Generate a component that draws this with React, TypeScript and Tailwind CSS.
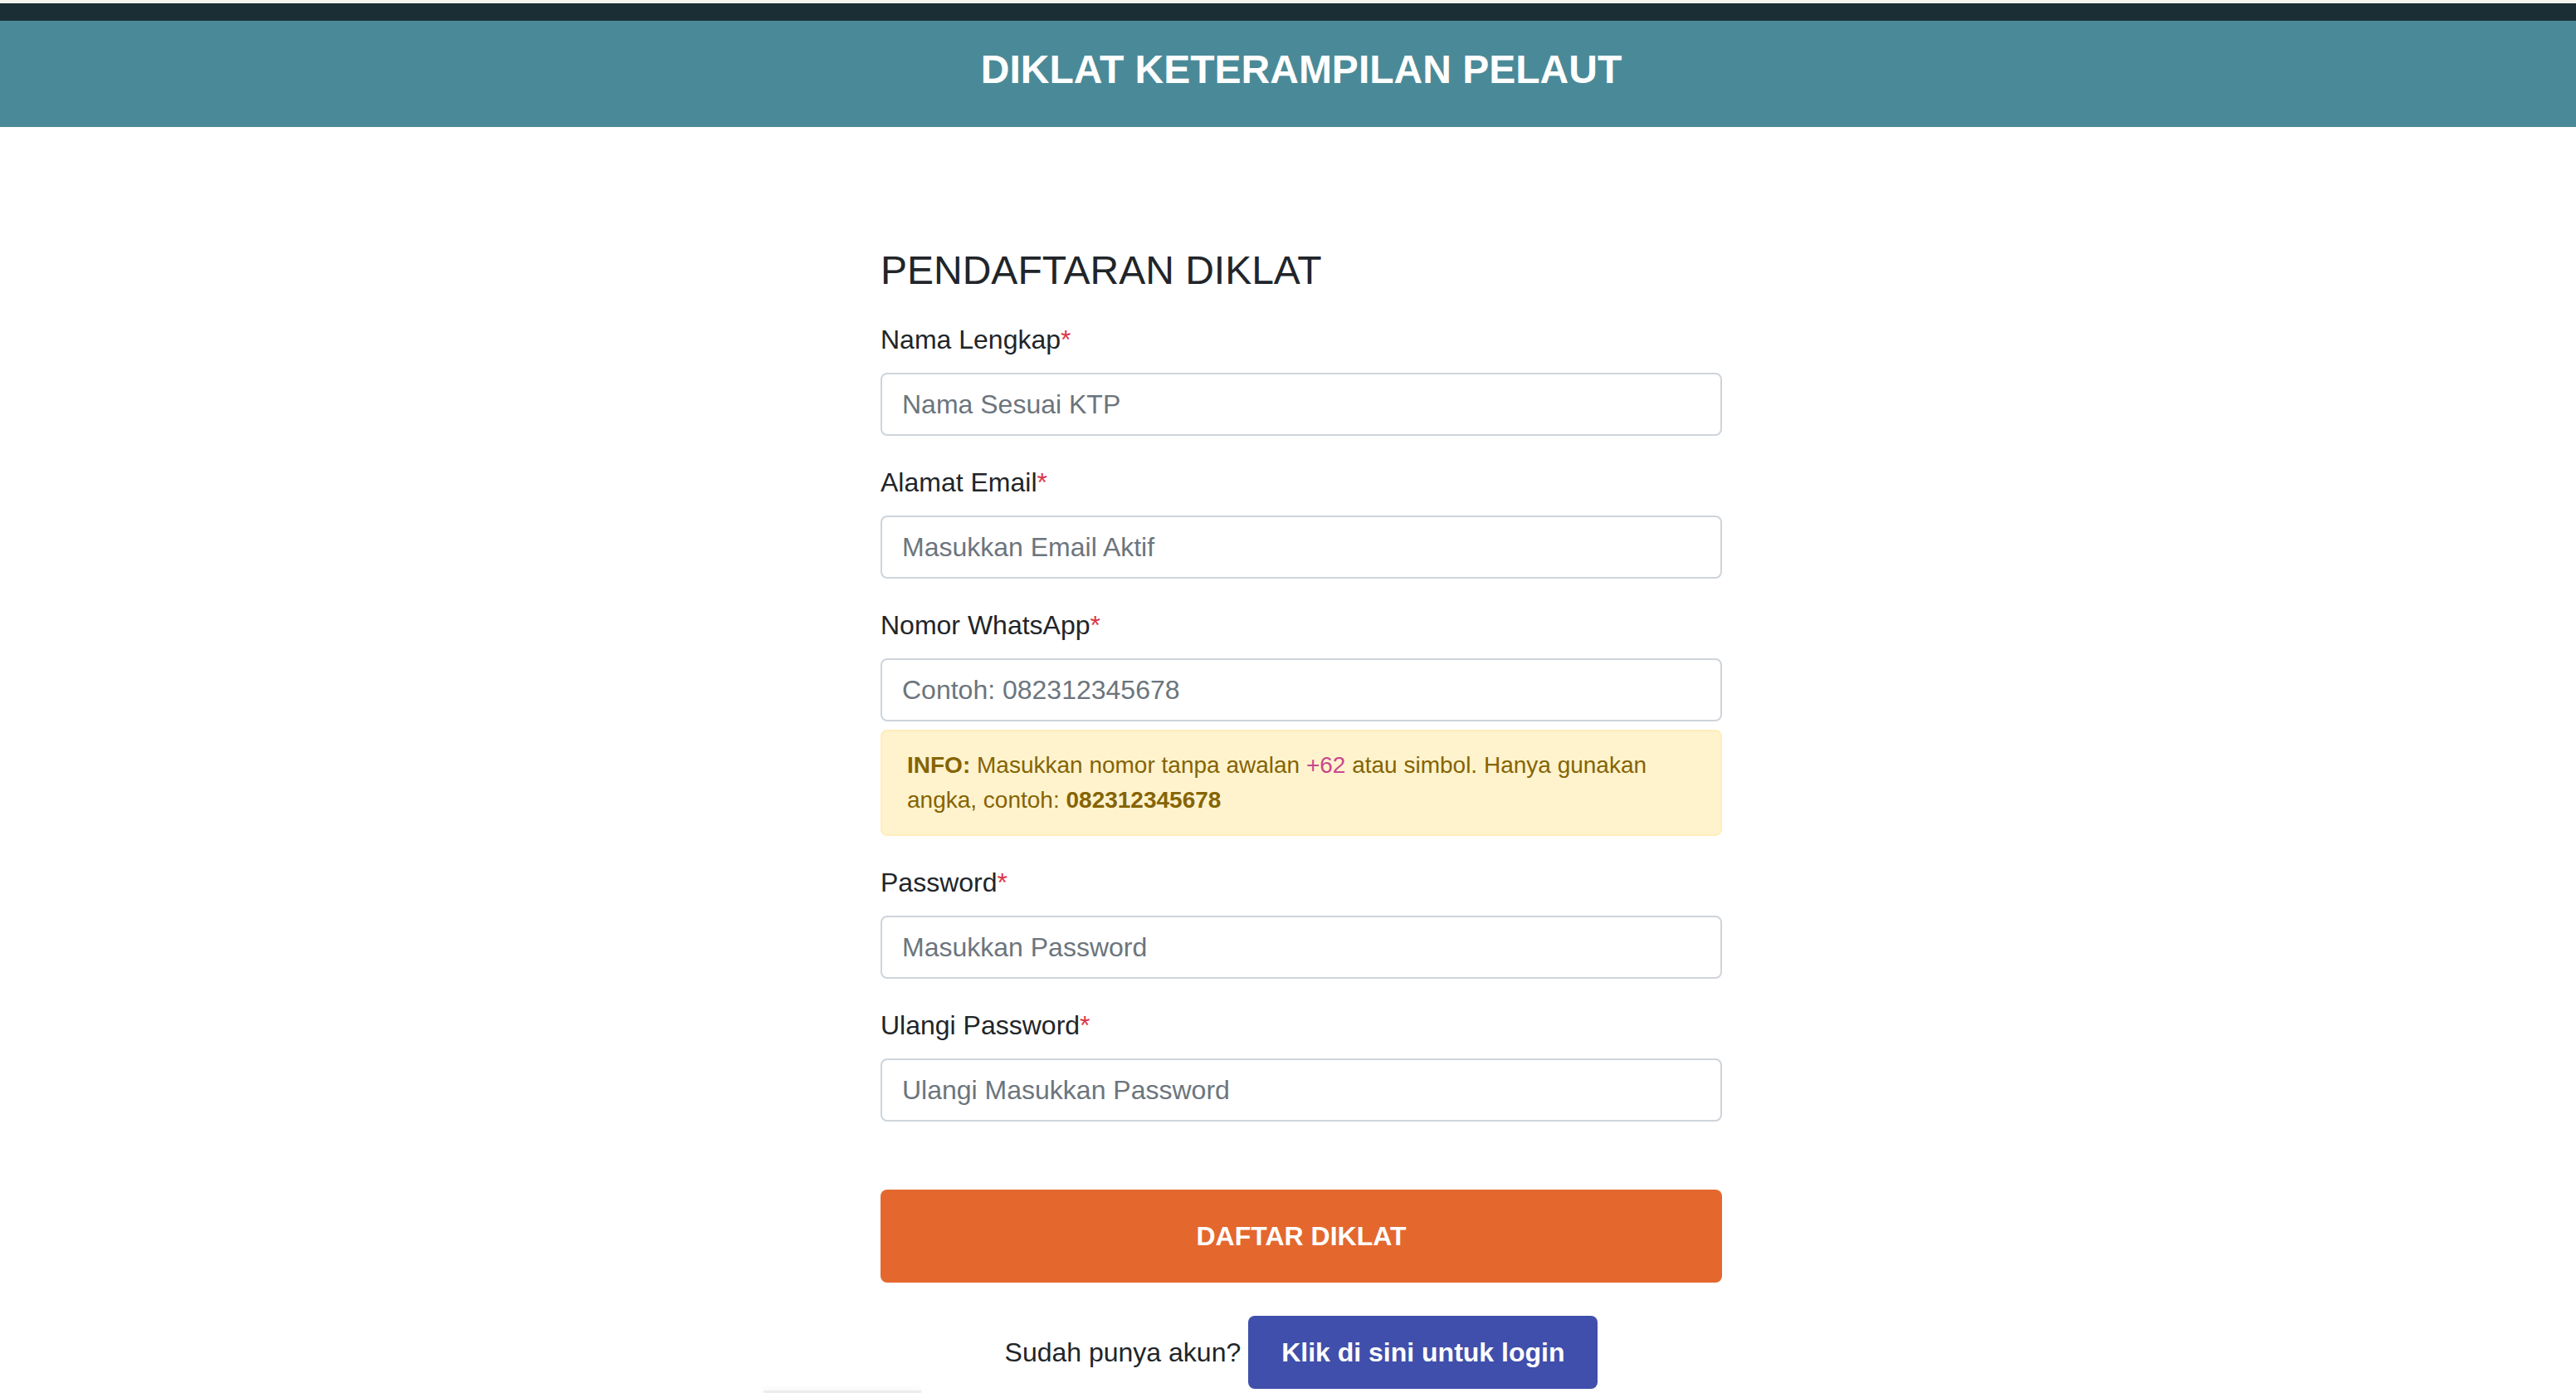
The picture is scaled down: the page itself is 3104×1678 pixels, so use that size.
import { useState } from "react";

interface FieldProps {
    readonly label: string;
    readonly placeholder: string;
    readonly type?: string;
    readonly children?: React.ReactNode;
}

const Field = ({ label, placeholder, type = "text", children }: FieldProps) => (
    <div className="mb-[32px]">
        <label className="mb-[16px] block text-[32px] leading-[48px] text-[#212529]">
            {label}
            <span className="text-[#dc3545]">*</span>
        </label>
        <input
            type={type}
            placeholder={placeholder}
            className="block h-[76px] w-full rounded-[8px] border-2 border-[#ced4da] bg-white px-[24px] text-[32px] text-[#495057] outline-none placeholder:text-[#6c757d]"
        />
        {children}
    </div>
);

const App = () => {
    const [sent, setSent] = useState(false);

    return (
        <div className="relative min-h-screen bg-white font-['Liberation_Sans',Arial,Helvetica,sans-serif]">
            <div className="h-[4px] bg-[#f4f5ef]" />
            <div className="h-[21px] bg-[#1b2e35]" />
            <header className="h-[128px] bg-[#4a8a98] pl-[32px] pt-[30px] text-center">
                <h1 className="text-[48px] font-bold leading-[58px] text-white">
                    DIKLAT KETERAMPILAN PELAUT
                </h1>
            </header>

            <main className="flex justify-center pl-[32px] pt-[144px]">
                <form
                    className="w-[1014px]"
                    onSubmit={(e) => {
                        e.preventDefault();
                        setSent(!sent);
                    }}
                >
                    <h2 className="mb-[30px] text-[48px] font-normal leading-[58px] text-[#212529]">
                        PENDAFTARAN DIKLAT
                    </h2>

                    <Field label="Nama Lengkap" placeholder="Nama Sesuai KTP" />
                    <Field label="Alamat Email" placeholder="Masukkan Email Aktif" type="email" />
                    <Field label="Nomor WhatsApp" placeholder="Contoh: 082312345678">
                        <div className="mt-[10px] rounded-[8px] border-2 border-[#ffeeba] bg-[#fff3cd] px-[30px] py-[20px] text-[28px] leading-[42px] text-[#856404]">
                            <b>INFO:</b> Masukkan nomor tanpa awalan{" "}
                            <span className="text-[#c8478e]">+62</span> atau simbol. Hanya gunakan
                            angka, contoh: <b>082312345678</b>
                        </div>
                    </Field>
                    <Field label="Password" placeholder="Masukkan Password" type="password" />
                    <Field label="Ulangi Password" placeholder="Ulangi Masukkan Password" type="password" />

                    <button
                        type="submit"
                        className="mt-[82px] block h-[112px] w-full rounded-[8px] bg-[#e4672e] text-[32px] font-bold text-white"
                    >
                        DAFTAR DIKLAT
                    </button>

                    <p className="mt-[40px] text-center text-[32px] leading-[48px] text-[#212529]">
                        Sudah punya akun?{" "}
                        <a
                            href="#"
                            className="inline-block rounded-[8px] bg-[#404fab] px-[40px] py-[20px] font-bold text-white"
                        >
                            Klik di sini untuk login
                        </a>
                    </p>
                </form>
            </main>

            {/* shadow of something just below the fold */}
            <div className="absolute left-[920px] top-[1675px] h-[3px] w-[190px] bg-[#ececec] shadow-[0_-2px_6px_rgba(0,0,0,0.06)]" />
        </div>
    );
};

export default App;
